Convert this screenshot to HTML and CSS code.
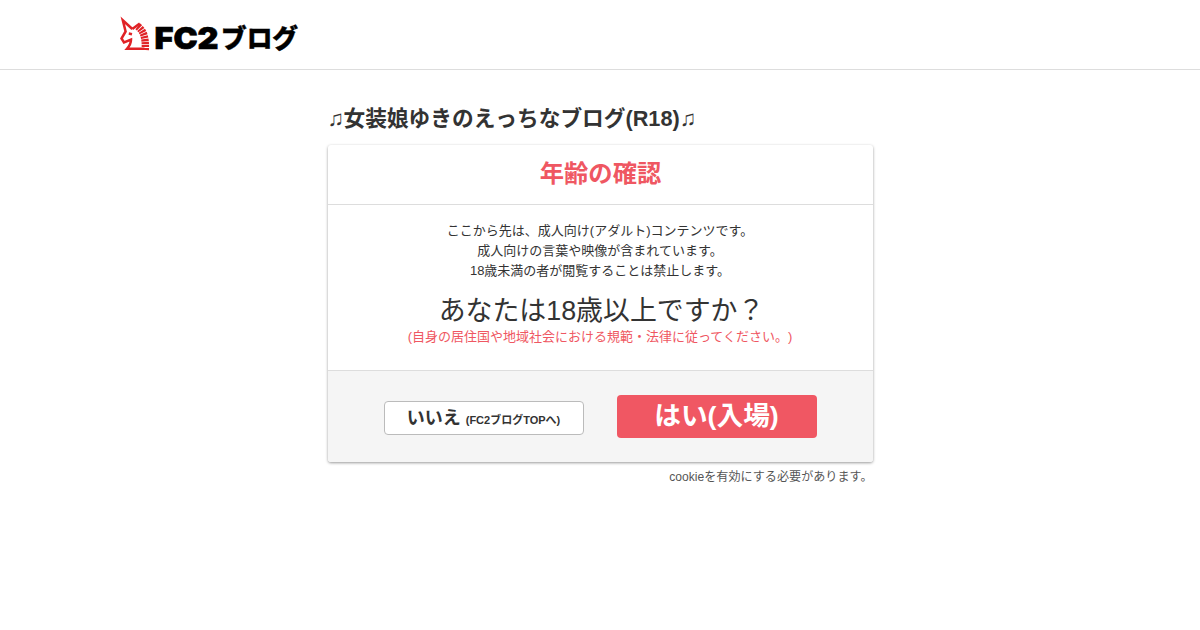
FILE: index.html
```html
<!DOCTYPE html>
<html lang="ja">
<head>
  <meta charset="UTF-8">
  <title>年齢の確認</title>
  <link rel="stylesheet" href="styles.css">
</head>
<body>
  <header class="header">
    <a class="logo" href="#">
      <svg width="180" height="60" viewBox="0 -11 180 60">
        <g fill="none" stroke="#e02226" stroke-width="2.5">
          <path d="M12.3 13 L2.8 4.3 L5.6 15.5 L1.5 22.5 L4 26.5 L11 23.7 Q11 28 7 32.8 H24.5"/>
          <path d="M12.3 13 L19.8 7.5"/>
          <path d="M8.8 17.5 L12 18.2"/>
          <path stroke-width="7.4" stroke-dasharray="2.2 .8" d="M17.8 10.3 C23.5 15 25.8 21 25.3 34"/>
        </g>
        <text class="logo-en" x="34.5" y="33" textLength="64" lengthAdjust="spacingAndGlyphs">FC2</text>
        <text class="logo-ja" x="101" y="31.5" textLength="77" lengthAdjust="spacingAndGlyphs">ブログ</text>
      </svg>
    </a>
  </header>

  <main class="container">
    <h1 class="blog-title"><span class="note">♫</span>女装娘ゆきのえっちなブログ(R18)<span class="note">♫</span></h1>

    <section class="card">
      <h2 class="card-title">年齢の確認</h2>
      <div class="card-body">
        <p class="message">ここから先は、成人向け(アダルト)コンテンツです。<br>成人向けの言葉や映像が含まれています。<br>18歳未満の者が閲覧することは禁止します。</p>
        <p class="question">あなたは18歳以上ですか？</p>
        <p class="caution">(自身の居住国や地域社会における規範・法律に従ってください。)</p>
      </div>
      <div class="buttons">
        <a class="btn btn-no" href="#">いいえ <small>(FC2ブログTOPへ)</small></a>
        <a class="btn btn-yes" href="#">はい(入場)</a>
      </div>
    </section>

    <p class="cookie">cookieを有効にする必要があります。</p>
  </main>
</body>
</html>
```

FILE: styles.css
```css
* {
  box-sizing: border-box;
  margin: 0;
  padding: 0;
}

body {
  font-family: "Liberation Sans", "Noto Sans CJK JP", sans-serif;
  font-size: 13px;
  line-height: 20px;
  text-spacing-trim: space-all;
  color: #333;
  background: #fff;
}

a {
  color: inherit;
  text-decoration: none;
}

.header {
  height: 70px;
  padding: 5px 120px 0;
  border-bottom: 1px solid #ddd;
}

.logo {
  display: block;
  width: 180px;
  height: 60px;
}

.logo svg {
  display: block;
}

.logo-en {
  font-family: Inter, "Liberation Sans", sans-serif;
  font-size: 30.5px;
  font-weight: 900;
  stroke: #000;
  stroke-width: .7px;
}

.logo-ja {
  font-family: "Noto Sans CJK JP", sans-serif;
  font-size: 26.5px;
  font-weight: 900;
  stroke: #000;
  stroke-width: .4px;
}

.container {
  width: 545px;
  margin: 0 auto;
  padding-top: 34px;
}

.blog-title {
  font-size: 21.7px;
  line-height: 30px;
  white-space: nowrap;
}

.note {
  display: inline-block;
  width: 16px;
  font-weight: normal;
}

.card {
  margin-top: 11px;
  border-radius: 3px;
  background: #fff;
  box-shadow: 0 1px 3px rgba(0, 0, 0, .4);
  overflow: hidden;
}

.card-title {
  height: 60px;
  padding-left: 1px;
  border-bottom: 1px solid #ddd;
  font-size: 24.3px;
  line-height: 58px;
  text-align: center;
  color: #ef5762;
}

.card-body {
  height: 165px;
  padding-top: 16px;
  text-align: center;
}

.question {
  margin-top: 13px;
  padding-left: 3px;
  font-size: 26.9px;
  line-height: 35px;
}

.caution {
  margin-top: -2px;
  color: #ef5762;
}

.buttons {
  display: flex;
  align-items: center;
  justify-content: center;
  gap: 33px;
  height: 92px;
  border-top: 1px solid #ddd;
  background: #f5f5f5;
}

.btn {
  width: 200px;
  border-radius: 4px;
  font-weight: bold;
  text-align: center;
}

.btn-no {
  height: 34px;
  margin-top: 2px;
  border: 1px solid #bbb;
  background: #fff;
  font-size: 18px;
  line-height: 32px;
}

.btn-no small {
  font-size: 11px;
}

.btn-yes {
  height: 43px;
  background: #f05763;
  color: #fff;
  font-size: 26.7px;
  line-height: 42px;
}

.cookie {
  margin-top: 5px;
  font-size: 12.1px;
  text-align: right;
  color: #555;
}
```
